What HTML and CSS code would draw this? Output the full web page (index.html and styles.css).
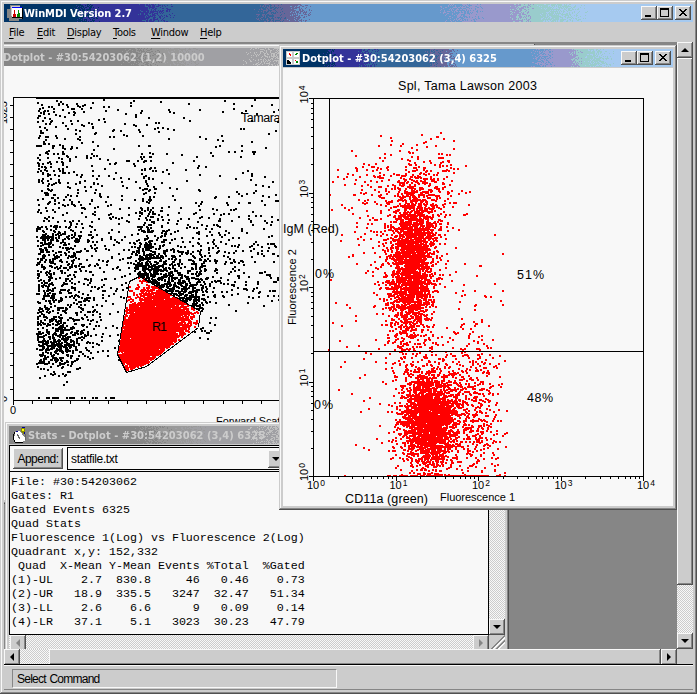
FILE: index.html
```html
<!DOCTYPE html>
<html lang="en">

<head>
  <meta charset="UTF-8" />
  <meta name="viewport" content="width=device-width, initial-scale=1.0" />
  <title>WinMDI Version 2.7</title>
  <link rel="stylesheet" href="styles.css">
</head>

<body>
  <div class="app frame">
    <div class="titlebar" data-active="1">
      <canvas class="dither"></canvas>
      <svg class="icon" width="16" height="16" shape-rendering="crispEdges">
        <path d="M3 0h10v3h2v11h-3v2h-10v-3h-2v-9h3z" fill="#868686" />
        <path d="M4 1h9v1h-8v9h-1z" fill="#ccc" />
        <path d="M5 2h10v11h-10z" fill="#fff" />
        <path d="M5 2h10v1h-10z" fill="#00f" />
        <path d="M6 12v-3h1v-4h1v4h1v3z" fill="#c00" />
        <path d="M10 12v-3h1v-4h1v3h1v4z" fill="#080" />
        <path d="M5 12h10v1h-10zM15 3h1v11h-1z" fill="#000" />
      </svg>
      <span class="title main-title">WinMDI Version 2.7</span>
      <div class="buttons">
        <button class="btn min"><i></i></button>
        <button class="btn max"><i></i></button>
        <button class="btn close"><svg width="8" height="7" shape-rendering="crispEdges"><path d="M0 0h2v1h1v1h2v-1h1v-1h2v1h-1v1h-1v1h-1v1h1v1h1v1h1v1h-2v-1h-1v-1h-2v1h-1v1h-2v-1h1v-1h1v-1h1v-1h-1v-1h-1v-1h-1z" /></svg></button>
      </div>
    </div>

    <div class="menu">
      <span><u>F</u>ile</span>
      <span><u>E</u>dit</span>
      <span><u>D</u>isplay</span>
      <span><u>T</u>ools</span>
      <span><u>W</u>indow</span>
      <span><u>H</u>elp</span>
    </div>

    <div class="work">
      <div class="mdi">
        <!-- forward / side scatter -->
        <div class="window frame win-scatter">
          <div class="titlebar">
            <canvas class="dither"></canvas>
            <span class="title">Dotplot - #30:54203062 (1,2) 10000</span>
          </div>
          <svg class="plot" id="scatter" width="548" height="434" viewBox="-17 66 548 434">
            <path class="line" id="scatterAxes" />
            <path id="blackDots" fill="#000" shape-rendering="crispEdges" />
            <path id="redDots" fill="#f00" shape-rendering="crispEdges" />
            <path class="line" d="M129.5 281.5L139.5 276.5L200.5 311.5L198.5 327.5L146.5 366.5L126.5 372.5L117.5 354.5z" />
            <text x="152" y="331" class="label" textLength="15">R1</text>
            <text x="241" y="122" class="label" textLength="83">Tamara Lawson</text>
            <text x="216" y="425" class="small" textLength="77">Forward Scatter</text>
            <text x="10" y="414" class="small">0</text>
            <text transform="translate(7 402) rotate(-90)" class="small">0</text>
            <text transform="translate(7 124) rotate(-90)" class="small" textLength="23">1023</text>
          </svg>
        </div>

        <!-- quadrant statistics -->
        <div class="window frame win-stats">
          <div class="titlebar">
            <canvas class="dither"></canvas>
            <svg class="icon" width="16" height="16" shape-rendering="crispEdges">
              <path d="M3 5h2v-1h3l5 7v3h-2v1h-8v-2h-1v-4h1z" fill="#fff" />
              <path d="M2 5h1v2h-1zM1 7h1v6h-1zM2 13h1v2h-1zM3 15h8v1h-8z" fill="#000" />
              <path d="M9 1h4v6h-2l-2 -3z" fill="#880" />
              <path d="M10 2h2v2h-2z" fill="#ff0" />
              <path d="M10 0h3v1h-3zM4 4h2v1h-2zM12 5h1v2h-1z" fill="#009" />
              <path d="M5 7h1v1h1v2h1v2h-1v-1h-1v-2h-1zM13 7h1v6h-1z" fill="#666" />
            </svg>
            <span class="title stats-title">Stats - Dotplot - #30:54203062 (3,4) 6325</span>
          </div>
          <div class="toolbar">
            <button class="append">Append:</button>
            <div class="combo"><span>statfile.txt</span><button class="btn arrow down"></button></div>
          </div>
          <div class="stats-body">
            <pre>File: #30:54203062
Gates: R1
Gated Events 6325
Quad Stats
Fluorescence 1(Log) vs Fluorescence 2(Log)
Quadrant x,y: 152,332
 Quad  X-Mean Y-Mean Events %Total  %Gated
(1)-UL    2.7  830.8     46   0.46    0.73
(2)-UR   18.9  335.5   3247  32.47   51.34
(3)-LL    2.6    6.6      9   0.09    0.14
(4)-LR   37.1    5.1   3023  30.23   47.79</pre>
            <div class="vscroll"><button class="btn arrow down"></button></div>
          </div>
          <div class="stats-foot">
            <div class="hscroll">
              <button class="btn arrow left off"></button>
              <button class="btn arrow right off"></button>
            </div>
            <div class="grip"></div>
          </div>
        </div>

        <!-- fluorescence -->
        <div class="window frame win-fluo">
          <div class="titlebar" data-active="1">
            <canvas class="dither"></canvas>
            <svg class="icon" width="14" height="14" shape-rendering="crispEdges">
              <path d="M0 0h14v14h-14z" fill="#ccc" />
              <path d="M1 1h5v5h-5zM8 1h5v5h-5zM1 8h5v5h-5zM8 8h5v5h-5z" fill="#fff" />
              <path d="M3 2h1v1h1v2h-1v-1h-1zM9 9h1v1h-1z" fill="#f00" />
              <path d="M10 2h2v1h-1v1h-2v-1h1zM10 10h2v2h-2z" fill="#080" />
              <path d="M1 9h2v1h1v1h1v2h-4z" fill="#000" />
            </svg>
            <span class="title">Dotplot - #30:54203062 (3,4) 6325</span>
            <div class="buttons">
              <button class="btn min"><i></i></button>
              <button class="btn max"><i></i></button>
              <button class="btn close"><svg width="8" height="7" shape-rendering="crispEdges"><path d="M0 0h2v1h1v1h2v-1h1v-1h2v1h-1v1h-1v1h-1v1h1v1h1v1h1v1h-2v-1h-1v-1h-2v1h-1v1h-2v-1h1v-1h1v-1h1v-1h-1v-1h-1v-1h-1z" /></svg></button>
            </div>
          </div>
          <svg class="plot fluo" width="390" height="438" viewBox="283 68 390 438">
            <path id="fluoDots" fill="#f00" shape-rendering="crispEdges" />
            <path class="line" d="M313.5 98.5H643.5V476.5H313.5zM329.5 98V476M313 351.5H643" />
            <path class="line" id="fluoTicks" />
            <text x="398" y="90" class="label" textLength="139">Spl, Tama Lawson 2003</text>
            <text x="283" y="233" class="label" textLength="56">IgM (Red)</text>
            <text x="315" y="278" class="label" textLength="19">0%</text>
            <text x="314" y="409" class="label" textLength="19">0%</text>
            <text x="517" y="279" class="label" textLength="27">51%</text>
            <text x="527" y="402" class="label" textLength="26">48%</text>
            <text x="345" y="503" class="label" textLength="83">CD11a (green)</text>
            <text x="440" y="501" class="small" textLength="75">Fluorescence 1</text>
            <text transform="translate(296 325) rotate(-90)" class="small" textLength="76">Fluorescence 2</text>
            <g id="decades"></g>
          </svg>
        </div>
      </div>

      <div class="vscroll main-v">
        <button class="btn arrow up"></button>
        <div class="thumb"></div>
        <button class="btn arrow down"></button>
      </div>
      <div class="hscroll main-h">
        <button class="btn arrow left"></button>
        <div class="thumb"></div>
        <button class="btn arrow right"></button>
      </div>
    </div>

    <div class="status"><span>Select Command</span></div>
  </div>

  <script src="plots.js"></script>
</body>

</html>
```
FILE: styles.css
```css
* {
  margin: 0;
  padding: 0;
  box-sizing: border-box;
}

body {
  width: 697px;
  height: 694px;
  overflow: hidden;
  font: 12px "Liberation Sans", Arial, sans-serif;
  color: #000;
  background: #ccc;
}

.frame {
  padding: 4px;
  background: #ccc;
  box-shadow: inset -1px -1px #505050, inset 1px 1px #ccc,
    inset -2px -2px #868686, inset 2px 2px #f8f8f8;
}

.app {
  width: 697px;
  height: 694px;
  display: flex;
  flex-direction: column;
}

/* title bars */
.titlebar {
  height: 18px;
  flex: none;
  position: relative;
  display: flex;
  align-items: center;
  padding: 0 2px 0 3px;
  color: #ccc;
  background: #868686;
}

.titlebar[data-active] {
  color: #fff;
  background: #369;
}

.dither {
  position: absolute;
  left: 0;
  top: 0;
  width: 100%;
  height: 100%;
}

.icon {
  position: relative;
  flex: none;
}

.title {
  position: relative;
  margin-left: 2px;
  padding-top: 1px;
  font: bold 11px/18px "DejaVu Sans Condensed", "DejaVu Sans", sans-serif;
  font-stretch: condensed;
  white-space: nowrap;
}

.main-title {
  margin-left: 1px;
  letter-spacing: -0.08px;
}

.stats-title {
  margin-left: 0;
  letter-spacing: 0.05px;
}

.buttons {
  position: relative;
  display: flex;
  margin-left: auto;
}

.btn {
  width: 16px;
  height: 14px;
  flex: none;
  display: flex;
  border: 0;
  background: #ccc;
  box-shadow: inset -1px -1px #505050, inset 1px 1px #f8f8f8, inset -2px -2px #868686;
}

.btn.close {
  margin-left: 2px;
  padding: 3px 0 0 4px;
}

.min i {
  width: 6px;
  height: 2px;
  margin: 9px 0 0 4px;
  background: #000;
}

.max i {
  width: 9px;
  height: 9px;
  margin: 2px 0 0 3px;
  border: 1px solid #000;
  border-top-width: 2px;
}

.menu {
  height: 20px;
  flex: none;
  display: grid;
  grid-template-columns: 28px 30px 46px 38px 49px auto;
  padding: 1px 0 0 5px;
  font: 11px/20px "DejaVu Sans Condensed", "DejaVu Sans", sans-serif;
  font-stretch: condensed;
  letter-spacing: -0.3px;
}

.menu u {
  text-underline-offset: 2px;
}

/* work area */
.work {
  height: 623px;
  flex: none;
  display: grid;
  grid-template-columns: 673px 16px;
  grid-template-rows: 607px 16px;
}

.mdi {
  position: relative;
  overflow: hidden;
  border-top: 2px solid #868686;
  background: #868686;
}

.window {
  position: absolute;
}

.win-scatter {
  left: -25px;
  top: 0;
  width: 556px;
  height: 460px;
}

.win-scatter .title {
  margin-left: 17px;
}

.win-stats {
  left: 1px;
  top: 378px;
  width: 504px;
  height: 240px;
}

.win-fluo {
  left: 275px;
  top: 1px;
  width: 398px;
  height: 465px;
}

.plot {
  display: block;
  background: #f8f8f8;
}

.fluo {
  margin-top: 1px;
}

.line {
  fill: none;
  stroke: #000;
  stroke-width: 1;
  shape-rendering: crispEdges;
}

.label {
  font-size: 12.5px;
}

.small {
  font-size: 11px;
}

.sup {
  font-size: 8.5px;
}

/* scroll bars */
.vscroll,
.hscroll {
  display: flex;
  background: repeating-conic-gradient(#ccc 0 25%, #f8f8f8 0 50%) 0 0 / 2px 2px;
}

.vscroll {
  flex-direction: column;
}

.vscroll .btn,
.hscroll .btn {
  width: 16px;
  height: 16px;
}

.thumb {
  background: #ccc;
  box-shadow: inset -1px -1px #505050, inset 1px 1px #f8f8f8, inset -2px -2px #868686;
}

.main-v .thumb {
  height: 527px;
}

.main-v .down {
  margin-top: auto;
}

.main-h .thumb {
  width: 612px;
  margin-left: 29px;
}

.arrow::before {
  content: "";
  margin: auto;
  border: 4px solid transparent;
}

.down::before {
  border-top-color: #000;
  border-bottom: 0;
}

.up::before {
  border-bottom-color: #000;
  border-top: 0;
}

.left::before {
  border-right-color: #000;
  border-left: 0;
}

.right::before {
  border-left-color: #000;
  border-right: 0;
}

.left.off::before {
  border-right-color: #868686;
}

.right.off::before {
  border-left-color: #868686;
}

/* stats window */
.toolbar {
  height: 27px;
  display: flex;
  align-items: center;
  gap: 4px;
  margin-top: 1px;
  padding: 1px 0 1px 3px;
  border: solid #000;
  border-width: 1px 0 1px 1px;
  background: #f8f8f8;
}

.append {
  width: 50px;
  height: 21px;
  border: 0;
  font: 12px "Liberation Sans", Arial, sans-serif;
  letter-spacing: -0.5px;
  background: #ccc;
  box-shadow: inset -1px -1px #505050, inset 1px 1px #f8f8f8, inset -2px -2px #868686;
}

.combo {
  width: 218px;
  height: 23px;
  display: flex;
  align-items: center;
  justify-content: space-between;
  padding: 1px 0 1px 3px;
  border: 1px solid #000;
  letter-spacing: -0.35px;
}

.combo .btn {
  height: 18px;
}

.stats-body {
  height: 163px;
  display: flex;
}

.stats-body pre {
  width: 480px;
  padding: 3px 0 0 1px;
  border: 1px solid #000;
  border-top: 0;
  font: 11.67px/14px "Liberation Mono", "Courier New", monospace;
  background: #f8f8f8;
}

.stats-body .vscroll {
  width: 16px;
  justify-content: flex-end;
}

.stats-foot {
  height: 16px;
  display: flex;
}

.stats-foot .hscroll {
  width: 480px;
  padding-left: 1px;
  justify-content: space-between;
}

.grip {
  width: 16px;
  background: linear-gradient(135deg, #ccc 50%, #868686 50% 56%, #f8f8f8 56% 62%, #ccc 62% 65%,
      #868686 65% 71%, #f8f8f8 71% 77%, #ccc 77%);
}

.status {
  height: 25px;
  flex: none;
  padding: 3px 8px 1px;
  border-top: 1px solid #f8f8f8;
  border-bottom: 1px solid #868686;
  box-shadow: 0 -1px #000;
}

.status span {
  display: block;
  width: 325px;
  height: 19px;
  padding-left: 4px;
  border: 1px solid;
  border-color: #868686 #f8f8f8 #f8f8f8 #868686;
  line-height: 18px;
  letter-spacing: -0.75px;
  word-spacing: 1px;
}
```
FILE: plots.js
```js
let seed = 54203062;

function rnd() {
  seed = (seed * 1664525 + 1013904223) % 4294967296;
  return seed / 4294967296;
}

function gauss() {
  return Math.sqrt(-2 * Math.log(1 - rnd())) * Math.cos(2 * Math.PI * rnd());
}

// title bar gradient, dithered between the palette colours
const active = [[0, 0, 51, 102], [0.1, 0, 51, 102], [0.14, 51, 51, 153], [0.19, 51, 51, 153], [0.25, 51, 102, 153],
  [0.36, 51, 102, 153], [0.41, 102, 102, 153], [0.45, 102, 153, 204], [0.63, 102, 153, 204],
  [0.7, 153, 153, 204], [0.73, 153, 153, 204], [0.77, 153, 204, 204], [0.85, 166, 202, 240], [1, 166, 202, 240]];
const inactive = [[0, 134, 134, 134], [0.25, 134, 134, 134], [0.33, 153, 153, 153], [0.4, 160, 160, 164],
  [0.47, 160, 160, 164], [0.6, 192, 192, 192], [1, 192, 192, 192]];

document.querySelectorAll(".titlebar").forEach(function (bar) {
  const c = bar.querySelector("canvas");
  const stops = bar.dataset.active ? active : inactive;
  c.width = bar.clientWidth;
  c.height = bar.clientHeight;
  const ctx = c.getContext("2d");
  for (let x = 0; x < c.width; x++) {
    const t = x / c.width;
    let i = 0;
    while (i < stops.length - 2 && stops[i + 1][0] < t) i++;
    const p = (t - stops[i][0]) / (stops[i + 1][0] - stops[i][0]);
    for (let y = 0; y < c.height; y++) {
      const s = rnd() < p ? stops[i + 1] : stops[i];
      ctx.fillStyle = `rgb(${s[1]},${s[2]},${s[3]})`;
      ctx.fillRect(x, y, 1, 1);
    }
  }
});

function dot(x, y) {
  return `M${Math.round(x)} ${Math.round(y)}h2v2h-2z`;
}

function setPath(id, d) {
  document.getElementById(id).setAttribute("d", d);
}

// ---- scatter plot ----
const gate = [[129, 281], [139, 276], [200, 311], [198, 327], [146, 366], [126, 372], [117, 354]];

function inGate(x, y) {
  let inside = false;
  for (let i = 0, j = gate.length - 1; i < gate.length; j = i++) {
    const [xi, yi] = gate[i];
    const [xj, yj] = gate[j];
    if ((yi > y) !== (yj > y) && x < ((xj - xi) * (y - yi)) / (yj - yi) + xi) inside = !inside;
  }
  return inside;
}

let black = "";
let red = "";

function addBlack(x, y) {
  if (x < 36 || x > 300 || y < 98 || y > 385 || inGate(x + 1, y + 1)) return;
  black += dot(x, y);
}

// debris on the left edge
for (let i = 0; i < 370; i++) addBlack(36 + Math.abs(gauss()) * 30, 100 + rnd() * 210);
for (let i = 0; i < 560; i++) addBlack(36 + Math.abs(gauss()) * 33, 225 + rnd() * 125);
for (let i = 0; i < 360; i++) addBlack(54 + gauss() * 16, 347 + gauss() * 14);
// column above the gate
for (let i = 0; i < 230; i++) addBlack(147 + gauss() * 7, 290 - Math.abs(gauss()) * 75);
for (let i = 0; i < 420; i++) {
  const x = 135 + rnd() * 68;
  addBlack(x, 276 + (x - 139) * 0.57 - Math.abs(gauss()) * 20);
}
for (let i = 0; i < 330; i++) addBlack(168 + gauss() * 32, 265 + gauss() * 26);
// background
for (let i = 0; i < 400; i++) addBlack(36 + rnd() * 245, 98 + rnd() * 200);
for (let i = 0; i < 190; i++) {
  const x = 190 + rnd() * 92;
  addBlack(x, 295 + gauss() * 10 - Math.abs(gauss()) * 50);
}
for (let i = 0; i < 45; i++) addBlack(75 + rnd() * 45, 300 + rnd() * 60);
for (let i = 0; i < 20; i++) addBlack(180 + rnd() * 35, 310 + rnd() * 30);
for (let i = 0; i < 24; i++) black += dot(36 + rnd() * 78, 397);
black += "M36 97h250v2h-250z";

for (let i = 0; i < 5800; i++) {
  const x = 150 + gauss() * 18;
  const y = 330 - (x - 150) * 0.55 + gauss() * 19;
  if (inGate(x, y) && inGate(x + 2, y + 2)) red += dot(x, y);
}
for (let i = 0; i < 760; i++) {
  const x = 117 + rnd() * 84;
  const y = 276 + rnd() * 96;
  if (inGate(x, y) && inGate(x + 2, y + 2)) red += dot(x, y);
}
setPath("blackDots", black);
setPath("redDots", red);

let axes = "M13.5 97.5H300M13.5 97V400.5H300";
for (let y = 105; y < 395; y += 11.83) axes += `M10 ${Math.round(y) + 0.5}h3`;
for (let x = 32; x < 300; x += 19.05) axes += `M${Math.round(x) + 0.5} 400v4`;
axes += "M13.5 400v5";
setPath("scatterAxes", axes);

// ---- fluorescence plot ----
let fluo = "";

function addFluo(x, y) {
  if (x < 313 || x > 507 || y < 130) return;
  fluo += dot(x, Math.min(y, 475));
}

for (let i = 0; i < 2700; i++) {
  const y = 262 + gauss() * 39;
  addFluo(411 + (262 - y) * 0.05 + gauss() * 11.5, y);
}
for (let i = 0; i < 270; i++) addFluo(405 + gauss() * 30, 215 + gauss() * 38);
for (let i = 0; i < 110; i++) addFluo(438 + gauss() * 9, 185 + gauss() * 25);
for (let i = 0; i < 90; i++) addFluo(378 + gauss() * 20, 180 + gauss() * 18);
for (let i = 0; i < 2500; i++) addFluo(428 + gauss() * 14, 418 + gauss() * 26);
for (let i = 0; i < 420; i++) addFluo(440 + gauss() * 24, 405 + gauss() * 38);
for (let i = 0; i < 330; i++) addFluo(476 + gauss() * 12, 420 + gauss() * 38);
for (let i = 0; i < 90; i++) addFluo(477 + gauss() * 16, 350 + gauss() * 50);
for (let i = 0; i < 60; i++) addFluo(370 + gauss() * 30, 340 + gauss() * 80);
for (let i = 0; i < 60; i++) addFluo(385 + rnd() * 105, 475);
setPath("fluoDots", fluo);

// log axes
let ticks = "";
let labels = "";
for (let d = 0; d <= 4; d++) {
  const x = 313 + d * 82.5;
  const y = 476 - d * 94.4;
  ticks += `M${Math.round(x) + 0.5} 476v5M309 ${Math.round(y) + 0.5}h4`;
  for (let k = 2; k < 10 && d < 4; k++) {
    ticks += `M${Math.round(x + Math.log10(k) * 82.5) + 0.5} 476v3`;
    ticks += `M311 ${Math.round(y - Math.log10(k) * 94.4) + 0.5}h2`;
  }
  labels += `<text class="small" x="${x - 6}" y="489">10<tspan class="sup" dx="1" dy="-3">${d}</tspan></text>`;
  labels += `<text class="small" transform="translate(308 ${y + 5}) rotate(-90)">10<tspan class="sup" dx="1" dy="-3">${d}</tspan></text>`;
}
setPath("fluoTicks", ticks);
document.getElementById("decades").innerHTML = labels;
```
